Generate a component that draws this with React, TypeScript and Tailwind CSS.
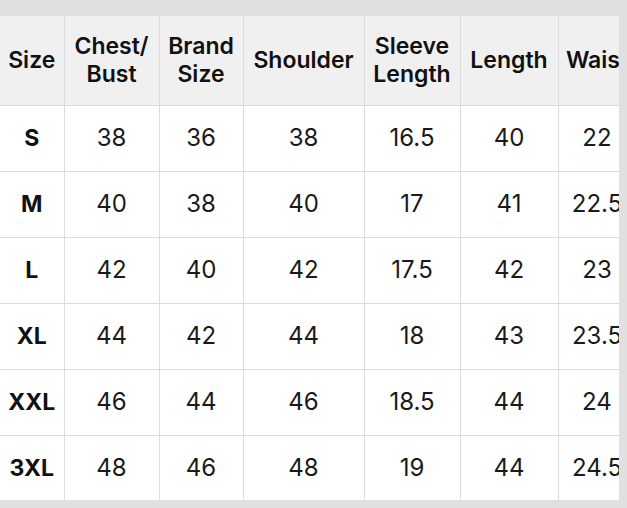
const headers = [
  { label: ["Size"], w: "w-[64px] min-w-[64px]" },
  { label: ["Chest/", "Bust"], w: "w-[95px] min-w-[95px]" },
  { label: ["Brand", "Size"], w: "w-[84px] min-w-[84px]" },
  { label: ["Shoulder"], w: "w-[121px] min-w-[121px]" },
  { label: ["Sleeve", "Length"], w: "w-[96px] min-w-[96px]" },
  { label: ["Length"], w: "w-[98px] min-w-[98px]" },
  { label: ["Waist"], w: "w-[78px] min-w-[78px]" },
];

const rows = [
  ["S", "38", "36", "38", "16.5", "40", "22"],
  ["M", "40", "38", "40", "17", "41", "22.5"],
  ["L", "42", "40", "42", "17.5", "42", "23"],
  ["XL", "44", "42", "44", "18", "43", "23.5"],
  ["XXL", "46", "44", "46", "18.5", "44", "24"],
  ["3XL", "48", "46", "48", "19", "44", "24.5"],
];

export default function App() {
  return (
    <div
      className="h-[508px] w-[627px] overflow-hidden bg-[#e0e0e0] pt-4 pr-2 pb-2"
      style={{ fontFamily: "Inter, 'Noto Sans', sans-serif" }}
    >
      <div className="h-full overflow-hidden bg-white">
        <table className="table-fixed border-collapse text-center text-[24px] text-[#1a1a1a]">
          <thead>
            <tr className="h-[89px] bg-[#f0f0f0]">
              {headers.map((h, i) => (
                <th
                  key={i}
                  className={`${h.w} border border-t-0 border-[#dcdcdc] px-1 text-[23px] font-semibold leading-[28px] text-[#111] ${i === 0 ? "border-l-0" : ""}`}
                >
                  {h.label.map((l) => (
                    <div key={l} className="whitespace-nowrap">
                      {l}
                    </div>
                  ))}
                </th>
              ))}
            </tr>
          </thead>
          <tbody>
            {rows.map((r) => (
              <tr key={r[0]} className="h-[66px]">
                {r.map((c, i) => (
                  <td
                    key={i}
                    className={`border border-[#dcdcdc] px-1 whitespace-nowrap ${i === 0 ? "border-l-0 text-[23px] font-bold text-[#111]" : ""}`}
                  >
                    {c}
                  </td>
                ))}
              </tr>
            ))}
          </tbody>
        </table>
      </div>
    </div>
  );
}
